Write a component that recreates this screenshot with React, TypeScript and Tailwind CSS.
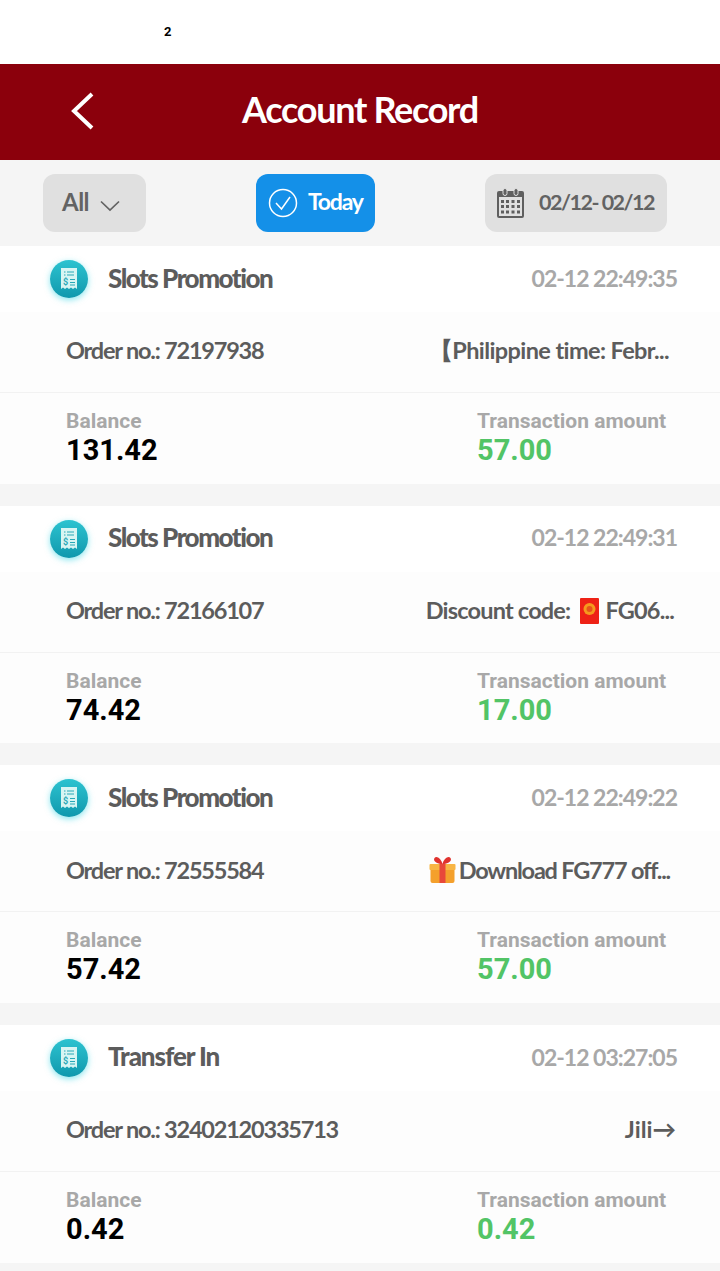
import React from "react";

const display = "font-['Lato','Liberation_Sans',sans-serif]";
const numeric = "font-['Roboto','Liberation_Sans',sans-serif]";

const ReceiptBadge = () => (
  <div className="w-[38px] h-[38px] rounded-full bg-gradient-to-b from-[#2cc3d0] to-[#0f98ad] shadow-[0_2px_6px_rgba(40,210,225,0.55)] flex items-center justify-center">
    <svg width="18" height="24" viewBox="0 0 18 24">
      <path d="M1 1h16v21l-2-1.5-2 1.5-2-1.5-2 1.5-2-1.5-2 1.5-2-1.5-2 1.5z" fill="#d8f5f3" />
      <path d="M4 5h1.5M7 5h7M4 8h1.5M7 8h7M10 12.5h5M10 15.5h5M10 18h5" stroke="#2aa9b8" strokeWidth="1.2" />
      <text x="3" y="18" fontSize="9" fontWeight="700" fill="#2aa9b8" fontFamily="Roboto, sans-serif">$</text>
    </svg>
  </div>
);

const RedEnvelope = () => (
  <svg width="19" height="26" viewBox="0 0 19 26" className="shrink-0 ml-[10px] mr-[6px]">
    <rect x="0" y="0" width="19" height="26" rx="1" fill="#ee2216" />
    <circle cx="9.5" cy="11" r="6" fill="#f59a1e" />
    <circle cx="9.5" cy="11" r="3" fill="#e8541a" />
  </svg>
);

const Gift = () => (
  <svg width="29" height="28" viewBox="0 0 28 28" className="shrink-0 mr-[2px]">
    <rect x="2" y="9" width="24" height="18" rx="2" fill="#f4a02c" />
    <rect x="1" y="8" width="26" height="6" rx="1" fill="#f8b545" />
    <rect x="11" y="8" width="6" height="19" fill="#e8483a" />
    <path d="M14 8C9 8 4 5 6 2s7 1 8 6c1-5 6-9 8-6s-3 6-8 6z" fill="#e0332e" />
  </svg>
);

type Record = {
  title: string;
  titleTracking: string;
  time: string;
  order: string;
  note: React.ReactNode;
  balance: string;
  amount: string;
};

const records: Record[] = [
  {
    title: "Slots Promotion",
    titleTracking: "tracking-[-1.5px]",
    time: "02-12 22:49:35",
    order: "72197938",
    note: <span className="pr-[7px] tracking-[-0.6px]">【Philippine time: Febr...</span>,
    balance: "131.42",
    amount: "57.00",
  },
  {
    title: "Slots Promotion",
    titleTracking: "tracking-[-1.5px]",
    time: "02-12 22:49:31",
    order: "72166107",
    note: (
      <span className="flex items-center pr-[2px] tracking-[-0.8px]">
        Discount code:
        <RedEnvelope />
        FG06...
      </span>
    ),
    balance: "74.42",
    amount: "17.00",
  },
  {
    title: "Slots Promotion",
    titleTracking: "tracking-[-1.5px]",
    time: "02-12 22:49:22",
    order: "72555584",
    note: (
      <span className="flex items-center pr-[6px]">
        <Gift />
        Download FG777 off...
      </span>
    ),
    balance: "57.42",
    amount: "57.00",
  },
  {
    title: "Transfer In",
    titleTracking: "tracking-[-1.1px]",
    time: "02-12 03:27:05",
    order: "32402120335713",
    note: <span className="tracking-normal">Jili→</span>,
    balance: "0.42",
    amount: "0.42",
  },
];

const RecordCard = ({ item }: { item: Record }) => (
  <div className="bg-[#fdfdfd]">
    <div className="h-[66px] bg-white flex items-center justify-between pl-[50px] pr-[43px]">
      <div className="flex items-center gap-[20px]">
        <ReceiptBadge />
        <span className={`${display} ${item.titleTracking} text-[26px] font-black text-[#5c5c5c] -mt-[2px]`}>{item.title}</span>
      </div>
      <span className={`${display} text-[23px] font-bold tracking-[-1px] text-[#a8a8a8] -mt-[2px]`}>{item.time}</span>
    </div>
    <div className={`${display} h-[81px] border-b border-[#f2f2f2] flex items-center justify-between pl-[66px] pr-[44px] pb-[2px] text-[23.5px] font-bold tracking-[-1.2px] text-[#5c5c5c]`}>
      <span>Order no.: {item.order}</span>
      {item.note}
    </div>
    <div className={`${numeric} h-[90.67px] flex justify-between pl-[66px] pr-[53px] pt-[17px]`}>
      <div>
        <div className="text-[21px] leading-[22px] font-bold text-[#a8a8a8]">Balance</div>
        <div className="text-[29px] leading-[36px] font-bold text-black">{item.balance}</div>
      </div>
      <div className="w-[190px]">
        <div className="text-[21px] leading-[22px] font-bold text-[#a8a8a8] whitespace-nowrap">Transaction amount</div>
        <div className="text-[29px] leading-[36px] font-bold text-[#52c466]">{item.amount}</div>
      </div>
    </div>
  </div>
);

export default function App() {
  return (
    <div className="w-[720px] h-[1271px] overflow-hidden bg-[#f5f5f5]">
      <div className={`${numeric} h-[64px] bg-white pl-[164px] pt-[24px] text-[13px] leading-[16px] font-bold text-black`}>2</div>
      <div className="relative h-[96px] bg-[#8b000c] flex items-center justify-center">
        <svg width="24" height="38" viewBox="0 0 24 38" className="absolute left-[71px] top-[28px]" fill="none">
          <path d="M21 2 3 19l18 17" stroke="#fff" strokeWidth="4" />
        </svg>
        <span className={`${display} text-[36px] font-bold tracking-[-1.3px] text-white -mt-[6px]`}>Account Record</span>
      </div>
      <div className={`${display} h-[86px] flex items-center justify-between pl-[43px] pr-[53px] text-[24px] font-bold`}>
        <div className="w-[103px] h-[58px] rounded-xl bg-[#e0e0e0] flex items-center pl-[19px] gap-[11px] text-[#636363]">
          <span className="-mt-[3px] tracking-[-0.5px]">All</span>
          <svg width="20" height="12" viewBox="0 0 20 12" fill="none" className="mt-[5px] shrink-0">
            <path d="M1 1.500 10 10l9-8.500" stroke="#636363" strokeWidth="1.700" />
          </svg>
        </div>
        <div className="w-[119px] h-[58px] rounded-xl bg-[#1490e8] flex items-center pl-[12px] gap-[10px] text-white text-[23px] tracking-[-1.2px]">
          <svg width="30" height="30" viewBox="0 0 30 30" fill="none" className="shrink-0">
            <circle cx="15" cy="15" r="13.500" stroke="#fff" strokeWidth="1.500" />
            <path d="m8 15 5.500 6L22 9" stroke="#fff" strokeWidth="1.500" />
          </svg>
          <span className="-mt-[3px]">Today</span>
        </div>
        <div className="w-[182px] h-[58px] rounded-xl bg-[#e0e0e0] flex items-center pl-[12px] gap-[15px] text-[#636363] text-[21.5px] tracking-[-1.5px]">
          <svg width="27" height="30" viewBox="0 0 27 30" className="shrink-0">
            <path d="M2 3h23a2 2 0 0 1 2 2v23a2 2 0 0 1-2 2H2a2 2 0 0 1-2-2V5a2 2 0 0 1 2-2z" fill="#5f5f5f" />
            <rect x="2" y="9" width="23" height="19" fill="#e0e0e0" />
            <rect x="6" y="0.500" width="4" height="7" rx="2" fill="#5f5f5f" stroke="#e0e0e0" />
            <rect x="17" y="0.500" width="4" height="7" rx="2" fill="#5f5f5f" stroke="#e0e0e0" />
            <path d="M4 12h3v3H4zM9 12h3v3H9zM14.500 12h3v3h-3zM20 12h3v3h-3zM4 17h3v3H4zM9 17h3v3H9zM14.500 17h3v3h-3zM20 17h3v3h-3zM4 22.500h3v3H4zM9 22.500h3v3H9zM14.500 22.500h3v3h-3zM20 22.500h3v3h-3z" fill="#5f5f5f" />
          </svg>
          <span className="whitespace-nowrap -mt-[2px]">02/12- 02/12</span>
        </div>
      </div>
      <div className="flex flex-col gap-[22px]">
        {records.map((item) => (
          <RecordCard key={item.order} item={item} />
        ))}
      </div>
    </div>
  );
}
